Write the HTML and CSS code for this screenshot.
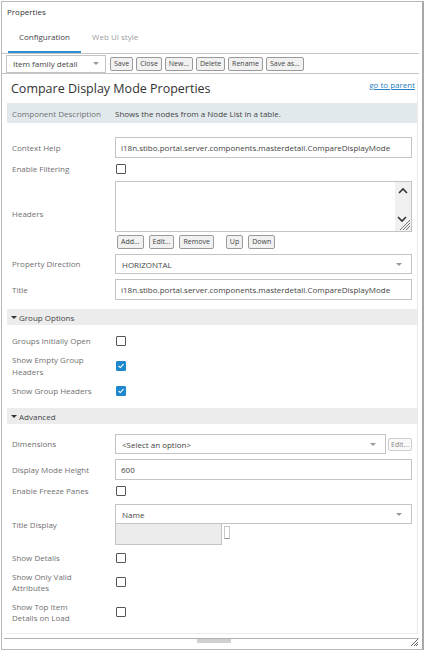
FILE: index.html
```html
<!DOCTYPE html>
<html>
<head>
<meta charset="utf-8">
<link rel="stylesheet" href="styles.css">
</head>
<body>
<div class="window">
  <div class="win-title">Properties</div>
  <div class="tabs">
    <div class="tab active">Configuration</div>
    <div class="tab">Web UI style</div>
  </div>
  <div class="toolbar">
    <div class="select tb-select"><span>Item family detail</span><span class="caret"></span></div>
    <button class="btn">Save</button>
    <button class="btn">Close</button>
    <button class="btn">New...</button>
    <button class="btn">Delete</button>
    <button class="btn">Rename</button>
    <button class="btn">Save as...</button>
  </div>
  <div class="scroll">
    <div class="panel">
      <div class="head">
        <div class="title">Compare Display Mode Properties</div>
        <a class="link">go to parent</a>
      </div>
      <div class="desc">
        <div class="label">Component Description</div>
        <div class="desc-text">Shows the nodes from a Node List in a table.</div>
      </div>

      <div class="section general">
        <div class="row">
          <div class="label">Context Help</div>
          <div class="field"><div class="input">i18n.stibo.portal.server.components.masterdetail.CompareDisplayMode</div></div>
        </div>
        <div class="row cb-row">
          <div class="label">Enable Filtering</div>
          <div class="field"><span class="cb"></span></div>
        </div>
        <div class="row headers-row">
          <div class="label">Headers</div>
          <div class="field">
            <div class="textarea">
              <div class="ta-bar">
                <svg class="ta-up" width="10" height="7" viewBox="0 0 10 7"><path d="M1 6 L5 2 L9 6" fill="none" stroke="#333" stroke-width="1.6"/></svg>
                <svg class="ta-down" width="16" height="16" viewBox="0 0 16 16"><path d="M3 2 L7 6 L11 2" fill="none" stroke="#333" stroke-width="1.6"/><path d="M5 15 L15 5 M8 15 L15 8 M11 15 L15 11" stroke="#777" stroke-width="1"/></svg>
              </div>
            </div>
            <div class="btn-row">
              <button class="btn">Add...</button>
              <button class="btn">Edit...</button>
              <button class="btn">Remove</button>
              <button class="btn gap">Up</button>
              <button class="btn">Down</button>
            </div>
          </div>
        </div>
        <div class="row direction-row">
          <div class="label">Property Direction</div>
          <div class="field"><div class="select"><span>HORIZONTAL</span><span class="caret"></span></div></div>
        </div>
        <div class="row">
          <div class="label">Title</div>
          <div class="field"><div class="input">i18n.stibo.portal.server.components.masterdetail.CompareDisplayMode</div></div>
        </div>
      </div>

      <div class="group-h"><span class="tri"></span>Group Options</div>
      <div class="section groups">
        <div class="row cb-row">
          <div class="label">Groups Initially Open</div>
          <div class="field"><span class="cb"></span></div>
        </div>
        <div class="row cb-row">
          <div class="label">Show Empty Group Headers</div>
          <div class="field"><span class="cb checked"><svg width="10" height="10" viewBox="0 0 10 10"><path d="M2.5 5 L4.3 6.6 L7.5 3.2" fill="none" stroke="#fff" stroke-width="1.1"/></svg></span></div>
        </div>
        <div class="row cb-row">
          <div class="label">Show Group Headers</div>
          <div class="field"><span class="cb checked"><svg width="10" height="10" viewBox="0 0 10 10"><path d="M2.5 5 L4.3 6.6 L7.5 3.2" fill="none" stroke="#fff" stroke-width="1.1"/></svg></span></div>
        </div>
      </div>

      <div class="group-h"><span class="tri"></span>Advanced</div>
      <div class="section advanced">
        <div class="row">
          <div class="label">Dimensions</div>
          <div class="field dim">
            <div class="select"><span>&lt;Select an option&gt;</span><span class="caret"></span></div>
            <button class="btn flat">Edit...</button>
          </div>
        </div>
        <div class="row">
          <div class="label">Display Mode Height</div>
          <div class="field"><div class="input">600</div></div>
        </div>
        <div class="row cb-row freeze-row">
          <div class="label">Enable Freeze Panes</div>
          <div class="field"><span class="cb"></span></div>
        </div>
        <div class="row td-row">
          <div class="label">Title Display</div>
          <div class="field">
            <div class="select"><span>Name</span><span class="caret"></span></div>
            <div class="td-sub"><div class="disabled-box"></div><span class="mini-btn"></span></div>
          </div>
        </div>
        <div class="row cb-row details-row">
          <div class="label">Show Details</div>
          <div class="field"><span class="cb"></span></div>
        </div>
        <div class="row cb-row wide-gap">
          <div class="label">Show Only Valid Attributes</div>
          <div class="field"><span class="cb"></span></div>
        </div>
        <div class="row cb-row wide-gap last">
          <div class="label">Show Top Item Details on Load</div>
          <div class="field"><span class="cb"></span></div>
        </div>
      </div>
    </div>
    <div class="hscroll">
      <div class="thumb"></div>
      <svg class="grip" width="7" height="7" viewBox="0 0 7 7"><path d="M0 7 L7 0 M3 7 L7 3 M5 7 L7 5" stroke="#666" stroke-width="1"/></svg>
    </div>
  </div>
</div>
</body>
</html>
```
FILE: styles.css
```css
* { box-sizing: border-box; }
html, body { margin: 0; padding: 0; background: #fff; }
body {
  font-family: "Open Sans", "Noto Sans", sans-serif;
  font-size: 8px;
  color: #555;
}
.window {
  margin: 1px 1px 0 1px;
  width: 423px;
  height: 649px;
  border: 1px solid #b8b8b8;
  border-right: 2px solid #a8a8a8;
  display: flex;
  flex-direction: column;
}
.win-title {
  padding: 4px 0 0 5px;
  height: 22px;
  color: #333;
  font-size: 8px;
}
.tabs {
  display: flex;
  padding-left: 6px;
  margin-right: 3px;
  border-bottom: 1px solid #c4c4c4;
  height: 30px;
  align-items: stretch;
}
.tab {
  padding: 7px 11px 0 11px;
  color: #a0a0a0;
}
.tab.active {
  color: #444;
  border-bottom: 2px solid #2f8fd0;
}
.toolbar {
  display: flex;
  align-items: center;
  gap: 3px;
  padding: 1px 0 1px 4px;
  margin-right: 3px;
  border-bottom: 1px solid #c4c4c4;
  height: 20px;
}
.btn {
  font-family: inherit;
  font-size: 7px;
  color: #444;
  background: #f1f1f1;
  border: 1px solid #9a9a9a;
  border-radius: 2px;
  height: 14px;
  padding: 0 3px;
  line-height: 12px;
  margin: 0;
}
.select {
  height: 20px;
  border: 1px solid #c4c4c4;
  display: flex;
  align-items: center;
  justify-content: space-between;
  padding: 0 9px 0 6px;
  color: #444;
  background: #fff;
}
.tb-select {
  width: 100px;
  height: 18px;
  margin-right: 1px;
  padding-right: 6px;
}
.caret {
  width: 0; height: 0;
  border-left: 3px solid transparent;
  border-right: 3px solid transparent;
  border-top: 3px solid #999;
}
.scroll {
  flex: 1;
  display: flex;
  flex-direction: column;
  padding: 4px 3px 0 3px;
}
.panel {
  flex: 1;
  margin-left: 2px;
  margin-right: 1px;
  border-right: 1px solid #eaeaea;
  border-bottom: 1px solid #eaeaea;
}
.head {
  display: flex;
  justify-content: space-between;
  align-items: flex-start;
  height: 25px;
  padding: 0 2px 0 4px;
}
.title {
  font-size: 12.5px;
  color: #333;
  padding-top: 2px;
}
.link {
  color: #2a7fc1;
  text-decoration: underline;
  font-size: 8px;
  padding-top: 1px;
}
.desc {
  display: flex;
  align-items: center;
  background: #e2e9ec;
  height: 20px;
  padding-left: 5px;
}
.desc .label { width: 103px; color: #707070; }
.desc-text { color: #444; }
.section {
  padding: 0 5px;
  display: flex;
  flex-direction: column;
}
.section.general { padding-top: 14px; padding-bottom: 9px; }
.section.groups { padding-top: 10px; padding-bottom: 11px; }
.section.advanced { padding-top: 10px; }
.row {
  display: flex;
  align-items: center;
}
.row + .row { margin-top: 5px; }
.groups .row + .row { margin-top: 7px; }
.row .label {
  width: 103px;
  flex: none;
  color: #707070;
  line-height: 12px;
  padding-right: 20px;
}
.field { flex: 1; }
.input {
  height: 21px;
  border: 1px solid #c4c4c4;
  padding: 0 5px;
  display: flex;
  align-items: center;
  color: #444;
  white-space: nowrap;
  overflow: hidden;
}
.cb-row { min-height: 12px; }
.cb {
  display: block;
  width: 10px; height: 10px;
  border: 1px solid #555;
  border-radius: 1px;
  margin-left: 1px;
}
.cb.checked {
  background: #1e88cf;
  border-color: #1e88cf;
  position: relative;
}
.cb.checked svg { position: absolute; left: -1px; top: -1px; }
.row.headers-row { align-items: flex-start; margin-top: 6px; }
.headers-row .label { padding-top: 27px; }
.row.direction-row { margin-top: 5px; }
.textarea {
  height: 51px;
  border: 1px solid #c4c4c4;
  display: flex;
  justify-content: flex-end;
}
.ta-bar {
  width: 16px;
  background: #f0f0f0;
  display: flex;
  flex-direction: column;
  justify-content: space-between;
  align-items: center;
  padding: 5px 0 0 0;
}
.btn-row {
  display: flex;
  gap: 5px;
  padding: 3px 0 0 2px;
}
.btn-row .gap { margin-left: 7px; }
.group-h {
  background: #ececec;
  height: 16px;
  display: flex;
  align-items: center;
  color: #444;
  padding-left: 4px;
}
.tri {
  width: 0; height: 0;
  border-left: 3px solid transparent;
  border-right: 3px solid transparent;
  border-top: 3px solid #333;
  margin-right: 2px;
}
.dim { display: flex; align-items: center; gap: 2px; }
.dim .select { flex: 1; }
.btn.flat {
  border-color: #ccc;
  background: #fafafa;
  color: #888;
  height: 13px;
  padding: 0 2px;
}
.row.freeze-row { margin-top: 5px; }
.row.td-row { margin-top: 7px; }
.td-sub { display: flex; align-items: flex-start; }
.disabled-box {
  width: 107px;
  height: 21px;
  background: #ececec;
  border: 1px solid #c4c4c4;
  border-top: none;
}
.mini-btn {
  width: 6px; height: 13px;
  border: 1px solid #c8c8c8;
  border-bottom-color: #999;
  margin: 2px 0 0 2px;
}
.row.details-row { margin-top: 7px; }
.row.wide-gap { margin-top: 7px; }
.row.wide-gap.last { margin-top: 8px; }
.wide-gap .label { line-height: 11px; }
.hscroll {
  height: 11px;
  border-top: 1px solid #b0b0b0;
  margin: 4px 0 0 -1px;
  position: relative;
}
.thumb {
  position: absolute;
  left: 193px;
  top: 0;
  width: 34px;
  height: 4px;
  background: #d0d0d0;
}
.grip { position: absolute; right: 1px; top: 0; }
```
